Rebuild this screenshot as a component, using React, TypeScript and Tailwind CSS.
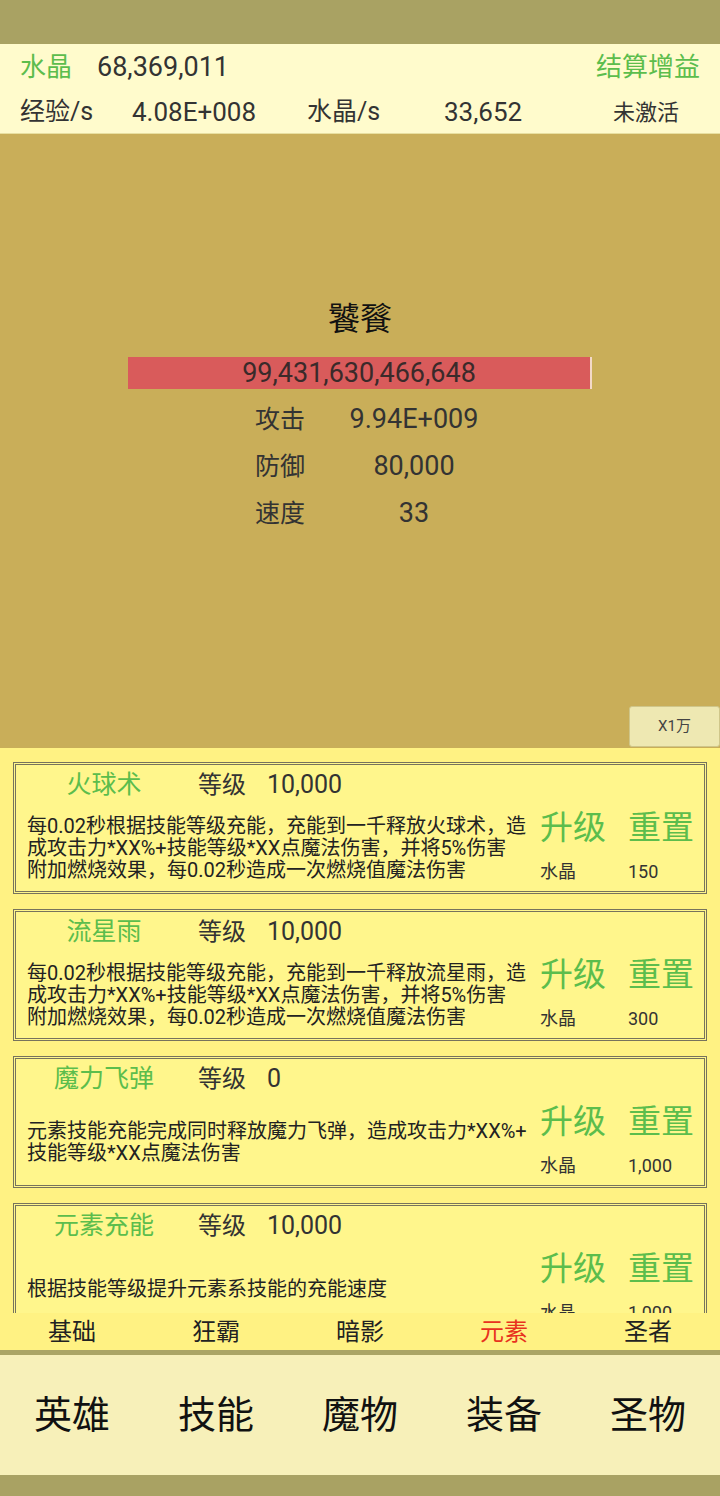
import React from 'react';

const font = { fontFamily: '"Roboto", "Noto Sans CJK SC", sans-serif' };

interface Skill {
  name: string;
  level: string;
  lines: string[];
  cost: string;
}

const skills: Skill[] = [
  {
    name: '火球术',
    level: '10,000',
    lines: [
      '每0.02秒根据技能等级充能，充能到一千释放火球术，造',
      '成攻击力*XX%+技能等级*XX点魔法伤害，并将5%伤害',
      '附加燃烧效果，每0.02秒造成一次燃烧值魔法伤害',
    ],
    cost: '150',
  },
  {
    name: '流星雨',
    level: '10,000',
    lines: [
      '每0.02秒根据技能等级充能，充能到一千释放流星雨，造',
      '成攻击力*XX%+技能等级*XX点魔法伤害，并将5%伤害',
      '附加燃烧效果，每0.02秒造成一次燃烧值魔法伤害',
    ],
    cost: '300',
  },
  {
    name: '魔力飞弹',
    level: '0',
    lines: ['元素技能充能完成同时释放魔力飞弹，造成攻击力*XX%+', '技能等级*XX点魔法伤害'],
    cost: '1,000',
  },
  {
    name: '元素充能',
    level: '10,000',
    lines: ['根据技能等级提升元素系技能的充能速度'],
    cost: '1,000',
  },
];

const tabs = ['基础', '狂霸', '暗影', '元素', '圣者'];
const navItems = ['英雄', '技能', '魔物', '装备', '圣物'];

const SkillCard: React.FC<{ skill: Skill }> = ({ skill }) => (
  <div className="h-[132px] shrink-0 border-[3px] border-double border-[#77735c] bg-[#fff68c] pl-[11px]">
    <div className="flex h-[40px] items-center">
      <span className="w-[154px] text-center text-[25px] text-[#5cbd4c]">{skill.name}</span>
      <span className="ml-[17px] text-[24px] text-[#333]">等级</span>
      <span className="ml-[21px] text-[25px] text-[#333]">{skill.level}</span>
    </div>
    <div className="flex h-[86px]">
      <div className="flex w-[513px] flex-col justify-center text-[20px] leading-[22px] text-[#222]">
        {skill.lines.map((l, i) => (
          <div key={i} className="whitespace-nowrap">{l}</div>
        ))}
      </div>
      <div className="flex flex-col pt-[3px]">
        <div className="flex h-[40px] items-center text-[33px] text-[#5cbd4c]">
          <span className="w-[88px]">升级</span>
          <span>重置</span>
        </div>
        <div className="mt-[12px] flex h-[22px] items-center text-[18px] text-[#333]">
          <span className="w-[88px]">水晶</span>
          <span>{skill.cost}</span>
        </div>
      </div>
    </div>
  </div>
);

export default function App() {
  return (
    <div className="flex h-[1496px] w-[720px] flex-col overflow-hidden bg-[#a9a263]" style={font}>
      <div className="h-[44px] shrink-0 bg-[#a9a263]" />

      <div className="h-[90px] shrink-0 border-b border-[#e8dfa0] bg-[#fffbcc] text-[#333]">
        <div className="flex h-[46px] items-center justify-between px-5">
          <div className="flex items-center">
            <span className="w-[77px] text-[26px] text-[#5cbd4c]">水晶</span>
            <span className="text-[27px]">68,369,011</span>
          </div>
          <span className="text-[26px] text-[#5cbd4c]">结算增益</span>
        </div>
        <div className="flex h-[44px] items-center pl-5 text-[25px]">
          <span className="w-[112px]">经验/s</span>
          <span className="w-[175px] text-[26px]">4.08E+008</span>
          <span className="w-[137px]">水晶/s</span>
          <span className="w-[169px] text-[26px]">33,652</span>
          <span className="text-[22px]">未激活</span>
        </div>
      </div>

      <div className="flex h-[614px] shrink-0 flex-col items-center bg-[#c9ae59] pt-[165px]">
        <div className="h-[40px] text-[32px] leading-[40px] text-[#111]">饕餮</div>
        <div className="mt-[18px] flex h-[32px] w-[464px] items-center justify-center border-r-2 border-[#f3d9c8] bg-[#d95b5b] text-[27px] text-[#3a2a2a]">
          99,431,630,466,648
        </div>
        <div className="mt-[7px] w-[464px] text-[25px] text-[#333]">
          {[
            ['攻击', '9.94E+009'],
            ['防御', '80,000'],
            ['速度', '33'],
          ].map(([k, v]) => (
            <div key={k} className="flex h-[47px] items-center pl-[127px]">
              <span className="w-[64px]">{k}</span>
              <span className="w-[190px] text-center text-[27px]">{v}</span>
            </div>
          ))}
        </div>
        <div className="mt-auto mb-[1px] flex h-[41px] w-[91px] items-center justify-center self-end rounded-[3px] border border-[#cfc68a] bg-[#eee8b2] text-[15px] text-[#444]">
          X1万
        </div>
      </div>

      <div className="flex h-[565px] shrink-0 flex-col gap-[15px] overflow-hidden bg-[#fff283] px-[13px] pt-[14px]">
        {skills.map(s => (
          <SkillCard key={s.name} skill={s} />
        ))}
      </div>

      <div className="grid h-[37px] shrink-0 grid-cols-5 items-center bg-[#fff283] text-[24px] text-[#222]">
        {tabs.map(t => (
          <div key={t} className={`text-center ${t === '元素' ? 'text-[#e8321e]' : ''}`}>{t}</div>
        ))}
      </div>

      <div className="h-[5px] shrink-0 bg-[#aba565]" />

      <div className="grid h-[120px] shrink-0 grid-cols-5 items-center bg-[#f7f0b9] text-[38px] text-[#111]">
        {navItems.map(n => (
          <div key={n} className="text-center">{n}</div>
        ))}
      </div>

      <div className="flex-1 bg-[#a9a263]" />
    </div>
  );
}
